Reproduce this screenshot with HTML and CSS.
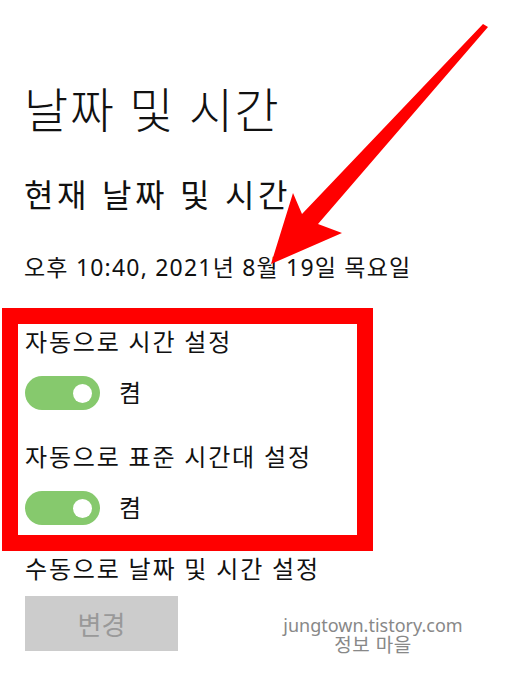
FILE: index.html
```html
<!DOCTYPE html>
<html lang="ko">
<head>
<meta charset="utf-8">
<link rel="stylesheet" href="styles.css">
</head>
<body>
<div class="page">
  <h1 class="title">날짜 및 시간</h1>
  <h2 class="subtitle">현재 날짜 및 시간</h2>
  <p class="now">오후 10:40, 2021년 8월 19일 목요일</p>
  <div class="highlight">
    <div class="setting">
      <div class="label">자동으로 시간 설정</div>
      <div class="toggle-row"><span class="toggle"><span class="knob"></span></span><span class="state">켬</span></div>
    </div>
    <div class="setting">
      <div class="label">자동으로 표준 시간대 설정</div>
      <div class="toggle-row"><span class="toggle"><span class="knob"></span></span><span class="state">켬</span></div>
    </div>
  </div>
  <div class="manual">
    <div class="label">수동으로 날짜 및 시간 설정</div>
    <div class="manual-row">
      <button class="btn" disabled>변경</button>
      <div class="watermark"><div class="wm-url">jungtown.tistory.com</div><div class="wm-name">정보 마을</div></div>
    </div>
  </div>
</div>
<svg class="arrow" width="528" height="300" viewBox="0 0 528 300">
  <polygon points="271,264 293,193 302,214 483,24 488,27 318,224 342,233" fill="#ff0000"/>
</svg>
</body>
</html>
```
FILE: styles.css
```css
html, body {
  margin: 0;
  padding: 0;
  background: #fff;
}
body {
  width: 528px;
  height: 700px;
  overflow: hidden;
  position: relative;
  font-family: "Segoe UI", "Noto Sans", "Noto Sans CJK KR", sans-serif;
  color: #111;
}
.page {
  padding: 78px 0 0 0;
}
.title {
  margin: 0 0 0 24px;
  font-size: 48px;
  font-weight: 300;
  letter-spacing: 1.5px;
  line-height: 64px;
}
.subtitle {
  margin: 33px 0 0 24px;
  font-size: 32px;
  font-weight: 400;
  letter-spacing: 3.6px;
  line-height: 40px;
}
.now {
  margin: 37px 0 0 24px;
  font-size: 23px;
  letter-spacing: 1.2px;
  line-height: 30px;
}
.highlight {
  margin-top: 26px;
  margin-left: 2px;
  width: 332px;
  border: 16px solid #ff0000;
  padding: 3px 0 10px 7px;
  display: flex;
  flex-direction: column;
  gap: 32px;
}
.setting {
  display: flex;
  flex-direction: column;
  gap: 19px;
}
.label {
  font-size: 24px;
  letter-spacing: 1.8px;
  line-height: 30px;
}
.toggle-row {
  display: flex;
  align-items: center;
  gap: 19px;
}
.toggle {
  width: 75px;
  height: 34px;
  border-radius: 17px;
  background: #86c96d;
  display: flex;
  align-items: center;
  justify-content: flex-end;
  padding-right: 8px;
  box-sizing: border-box;
}
.knob {
  width: 19px;
  height: 19px;
  border-radius: 50%;
  background: #fff;
}
.state {
  font-size: 24px;
  line-height: 30px;
}
.manual {
  margin: 3px 0 0 25px;
}
.manual-row {
  display: flex;
  align-items: flex-start;
  margin-top: 12px;
}
.btn {
  width: 153px;
  height: 55px;
  background: #cccccc;
  border: none;
  color: #999;
  font-family: inherit;
  font-size: 26px;
  padding: 0;
}
.watermark {
  margin: 19px 0 0 100px;
  width: 190px;
  text-align: center;
  color: #888;
  font-size: 18px;
  line-height: 20px;
}
.wm-name {
  font-size: 19px;
  letter-spacing: 0.5px;
}
.arrow {
  position: absolute;
  left: 0;
  top: 0;
}
```
